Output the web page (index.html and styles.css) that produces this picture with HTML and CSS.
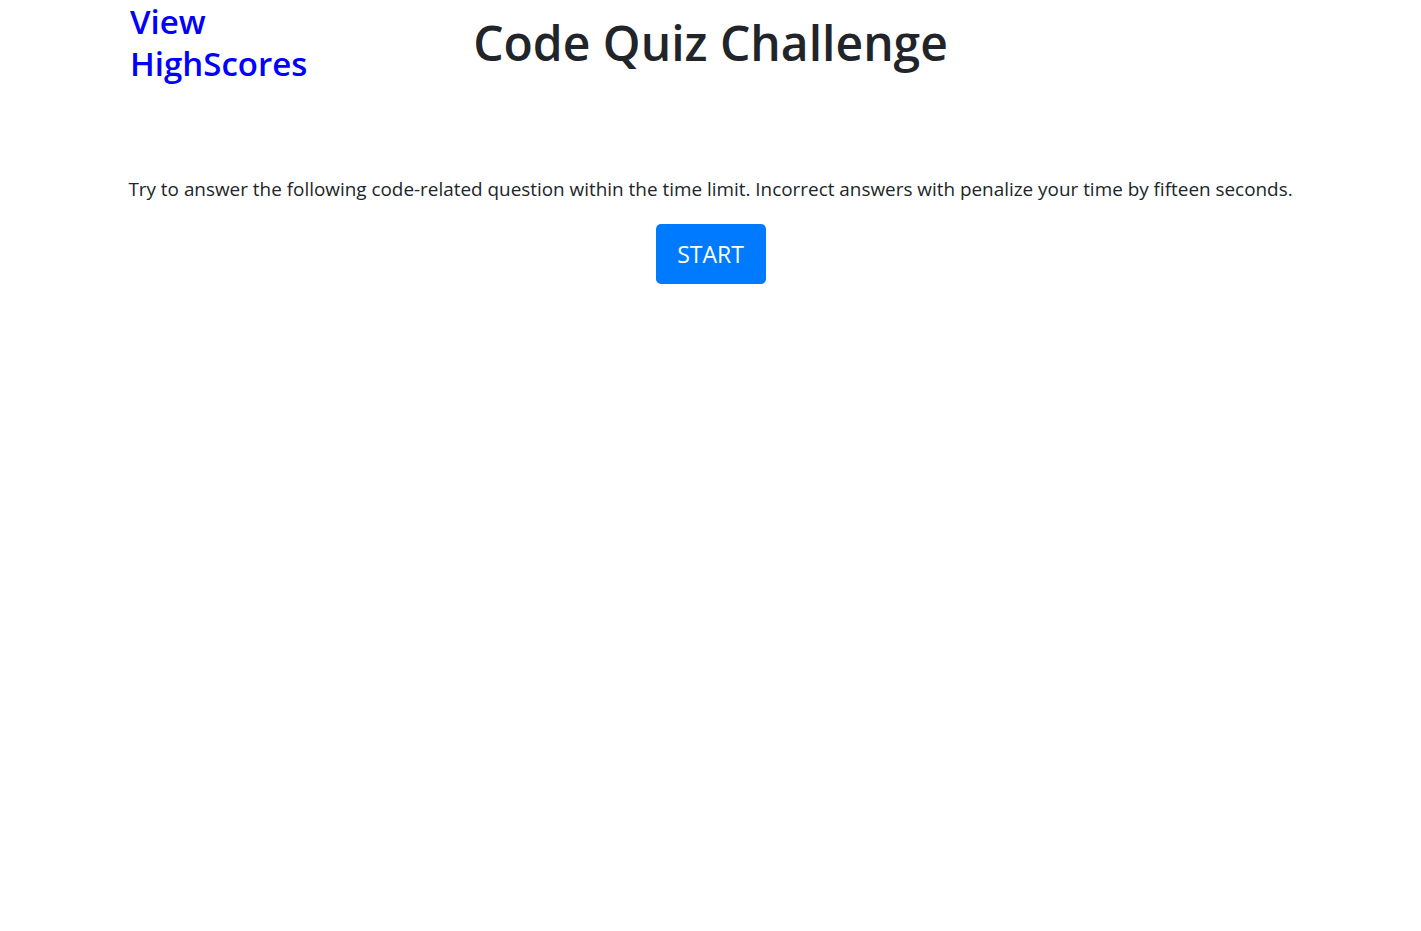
FILE: index.html
```html
<!DOCTYPE html>
<html lang="en">
<head>
<meta charset="utf-8">
<title>Code Quiz Challenge</title>
<link rel="stylesheet" href="styles.css">
</head>
<body>
<header class="top">
  <div class="nav-col"><a class="scores-link" href="#">View HighScores</a></div>
  <h1 class="title">Code Quiz Challenge</h1>
  <div class="spacer"></div>
</header>
<main class="intro">
  <p class="lead">Try to answer the following code-related question within the time limit. Incorrect answers with penalize your time by fifteen seconds.</p>
  <button class="start-btn" type="button">START</button>
</main>
</body>
</html>
```
FILE: styles.css
```css
html, body {
  margin: 0;
  padding: 0;
  background: #fff;
}
body {
  font-family: "Open Sans", "Noto Sans", "Liberation Sans", sans-serif;
  color: #212529;
}
.top {
  display: grid;
  grid-template-columns: 1fr auto 1fr;
  align-items: start;
  padding: 0 130px;
}
.nav-col {
  width: 200px;
}
.scores-link {
  display: block;
  color: #0000ff;
  text-decoration: none;
  font-size: 33px;
  font-weight: 600;
  line-height: 42px;
  margin-top: 1px;
}
.title {
  margin: 14px 0 0;
  font-size: 48px;
  font-weight: 600;
  line-height: 1.2;
  color: #212529;
}
.intro {
  display: flex;
  flex-direction: column;
  align-items: center;
  padding: 0 120px;
}
.lead {
  margin: 89px 0 0;
  font-size: 18.9px;
  line-height: 30px;
  text-align: center;
  color: #212529;
}
.start-btn {
  margin-top: 20px;
  width: 110px;
  height: 60px;
  border: none;
  border-radius: 5px;
  background: #007bff;
  color: #fff;
  font-family: inherit;
  font-size: 23px;
  cursor: pointer;
}
```
